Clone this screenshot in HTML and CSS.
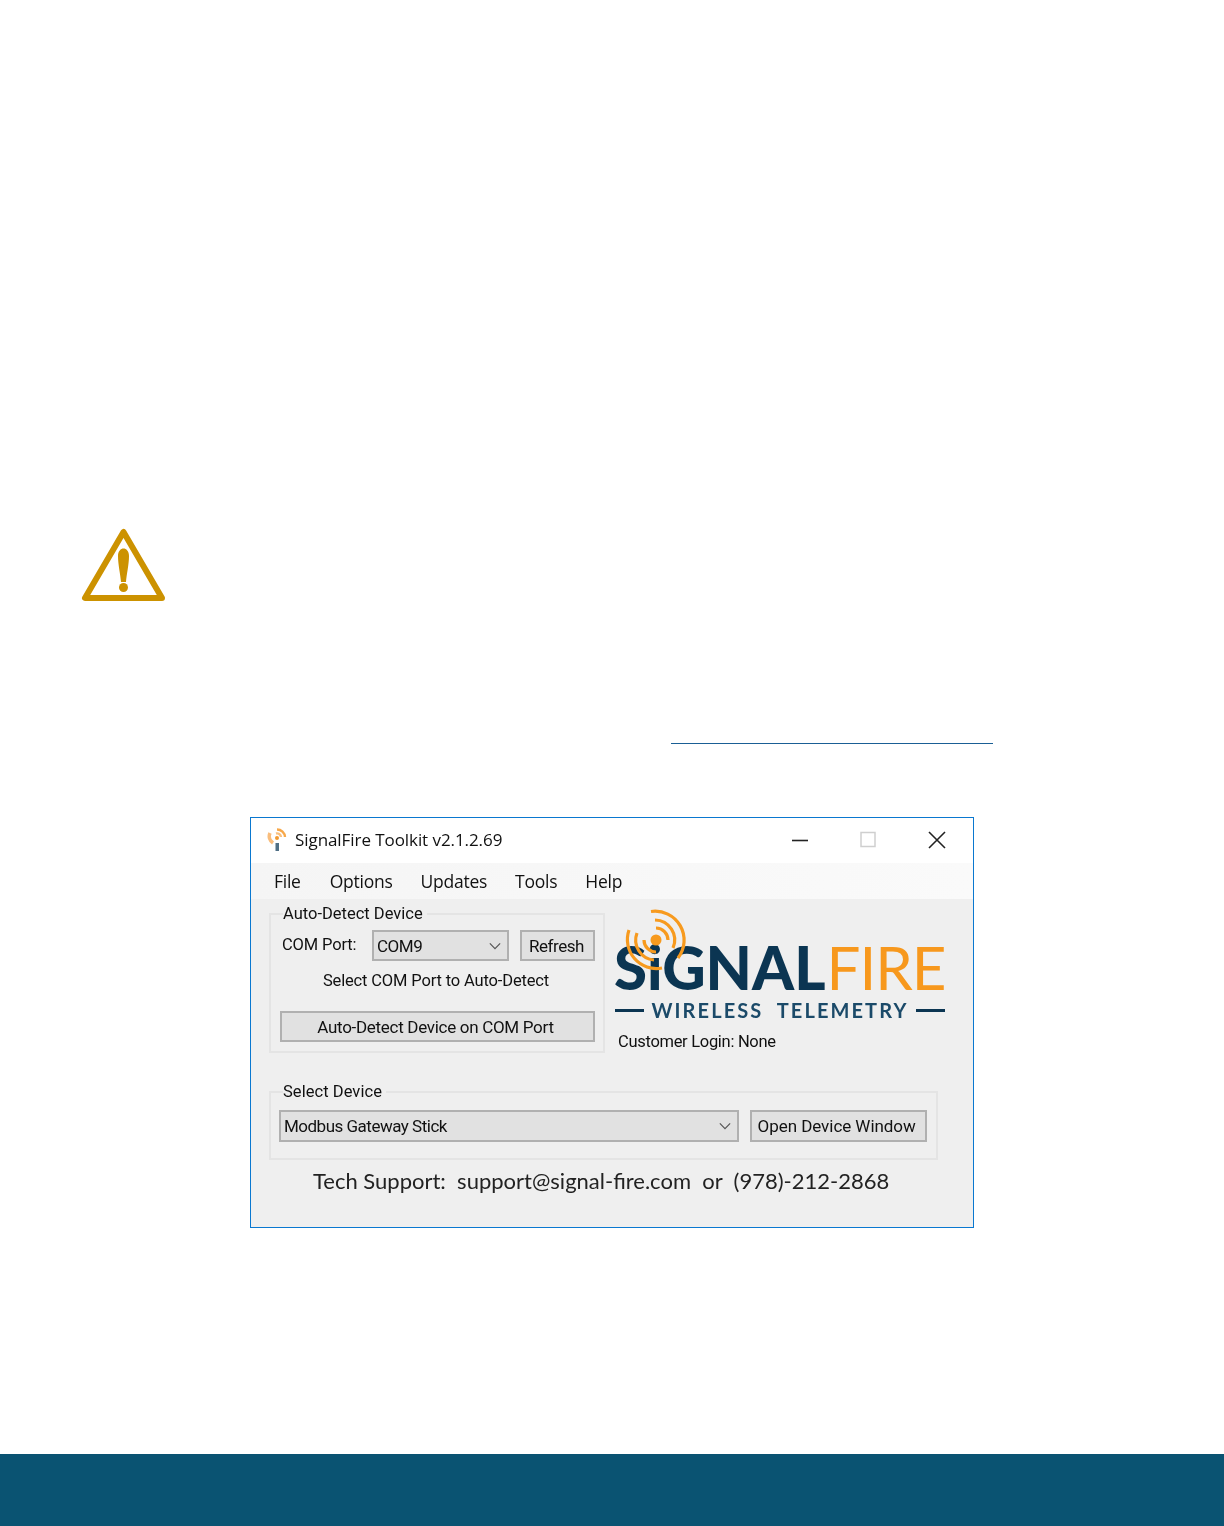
FILE: index.html
```html
<!DOCTYPE html>
<html lang="en">
<head>
<meta charset="utf-8">
<title>SignalFire Toolkit</title>
<link rel="stylesheet" href="styles.css">
</head>
<body>
<div class="page">
  <main class="content">
    <svg class="warn" width="86" height="76" viewBox="0 0 86 76" aria-hidden="true">
      <path d="M42.5 5 L4 71 H81 Z" fill="none" stroke="#cc9200" stroke-width="6" stroke-linejoin="round"/>
      <path d="M37 29 C37 19 48 19 48 29 C48 37 45.5 48 45 55 H40 C39.5 48 37 37 37 29 Z" fill="#cc9200"/>
      <circle cx="42.5" cy="60.5" r="4.5" fill="#cc9200"/>
    </svg>
    <a class="link-line" href="#" aria-hidden="true"></a>
    <section class="window">
      <header class="titlebar">
        <svg class="app-icon" width="20" height="24" viewBox="0 0 20 24" aria-hidden="true">
          <path d="M10 1.5 A8 8 0 0 1 18 9" fill="none" stroke="#f7a84a" stroke-width="2.4"/>
          <path d="M3 5 A8 8 0 0 0 6 15" fill="none" stroke="#f9bd7c" stroke-width="3.6"/>
          <path d="M9 5.5 A4 4 0 0 1 14 9" fill="none" stroke="#f9c080" stroke-width="2.4"/>
          <circle cx="10" cy="10" r="2" fill="#f39a30"/>
          <rect x="8.5" y="15" width="3.5" height="8" fill="#4f6f85"/>
        </svg>
        <span class="title">SignalFire Toolkit v2.1.2.69</span>
        <div class="controls">
          <svg width="16" height="18" viewBox="0 0 16 18" aria-hidden="true"><path d="M0 9.5 H16" stroke="#222" stroke-width="1.6"/></svg>
          <svg width="16" height="18" viewBox="0 0 16 18" aria-hidden="true"><rect x="1" y="1.5" width="14" height="14" fill="none" stroke="#cfcfcf" stroke-width="1.5"/></svg>
          <svg width="18" height="18" viewBox="0 0 18 18" aria-hidden="true"><path d="M1 1 L17 17 M17 1 L1 17" stroke="#222" stroke-width="1.6"/></svg>
        </div>
      </header>
      <nav class="menubar">
        <span>File</span><span>Options</span><span>Updates</span><span>Tools</span><span>Help</span>
      </nav>
      <div class="client">
        <div class="top-row">
          <fieldset class="group group-auto">
            <legend>Auto-Detect Device</legend>
            <div class="com-row">
              <span class="com-label">COM Port:</span>
              <div class="combo combo-com"><span>COM9</span>
                <svg width="12" height="8" viewBox="0 0 14 8" aria-hidden="true"><path d="M1 1 L7 7 L13 1" fill="none" stroke="#555" stroke-width="1.4"/></svg>
              </div>
              <button class="btn btn-refresh" type="button">Refresh</button>
            </div>
            <p class="hint">Select COM Port to Auto-Detect</p>
            <button class="btn btn-wide" type="button">Auto-Detect Device on COM Port</button>
          </fieldset>
          <div class="brand">
            <div class="logo">
              <div class="logo-name"><span class="navy">SiGNAL</span><span class="orange">FIRE</span></div>
              <svg class="rings" width="64" height="64" viewBox="0 0 64 64" aria-hidden="true">
                <g fill="none" stroke="#f79a1e" stroke-width="3.2">
                  <path d="M27 3.5 A29 29 0 0 1 54 50"/>
                  <path d="M5 22 A29 29 0 0 0 38 60"/>
                  <path d="M31 12 A20 20 0 0 1 49 40"/>
                  <path d="M13 25 A20 20 0 0 0 30 52"/>
                  <path d="M32 20 A12 12 0 0 1 44 32"/>
                  <path d="M20 32 A12 12 0 0 0 32 44"/>
                </g>
                <circle cx="32" cy="32" r="5.5" fill="#f79a1e"/>
              </svg>
              <div class="logo-tag"><i></i><span>WIRELESS&nbsp; TELEMETRY</span><i></i></div>
            </div>
            <div class="login">Customer Login: None</div>
          </div>
        </div>
        <fieldset class="group group-device">
          <legend>Select Device</legend>
          <div class="device-row">
            <div class="combo combo-device"><span>Modbus Gateway Stick</span>
              <svg width="12" height="8" viewBox="0 0 14 8" aria-hidden="true"><path d="M1 1 L7 7 L13 1" fill="none" stroke="#555" stroke-width="1.4"/></svg>
            </div>
            <button class="btn btn-open" type="button">Open Device Window</button>
          </div>
        </fieldset>
        <p class="support">Tech Support:&nbsp; support@signal-fire.com&nbsp; or&nbsp; (978)-212-2868</p>
      </div>
    </section>
  </main>
  <footer class="footer"></footer>
</div>
</body>
</html>
```

FILE: styles.css
```css
* { box-sizing: border-box; }
html, body { margin: 0; padding: 0; background: #fff; }
.page { height: 1526px; display: flex; flex-direction: column; }
.content { flex: 1; padding-top: 527px; display: flex; flex-direction: column; }
.warn { display: block; margin-left: 81px; }
.link-line { display: block; width: 322px; height: 1px; margin: 140px 0 0 671px; background: #1a5f95; }
.window {
  width: 724px; height: 411px; margin: 73px 0 0 250px;
  border: 1px solid #0a78d0; background: #efefef;
  display: flex; flex-direction: column;
  font-family: "Roboto", "Liberation Sans", sans-serif; color: #111;
  filter: blur(0.35px);
}
.titlebar { height: 45px; background: #fff; display: flex; align-items: center; padding: 0 27px 2px 16px; flex: none; }
.app-icon { flex: none; }
.title { margin-left: 8px; font-family: "Open Sans", sans-serif; font-size: 17px; letter-spacing: -0.07px; }
.controls { margin-left: auto; display: flex; align-items: center; gap: 52px; }
.menubar {
  height: 36px; flex: none; display: flex; align-items: center; gap: 28px; padding-left: 23px;
  background: linear-gradient(90deg, #f5f5f5, #fafafa);
  font-family: "Open Sans", sans-serif; font-size: 17.5px; letter-spacing: -0.25px;
}
.menubar span:first-child { margin-right: 1px; }
.client { flex: 1; padding: 6px 0 0 18px; display: flex; flex-direction: column; }
.top-row { display: flex; gap: 9px; }
.group { margin: 0; min-width: 0; border: 2px solid #e4e4e4; }
.group legend { padding: 0 4px 0 0; background: #efefef; font-size: 16.5px; line-height: 18px; letter-spacing: 0; }
.group-auto legend { margin-left: 3px; }
.group-device legend { margin-left: 4px; letter-spacing: 0.05px; }
.group-auto { width: 336px; height: 148px; padding: 7px 8px 8px 9px; }
.com-row { display: flex; align-items: center; height: 31px; }
.com-label { width: 90px; flex: none; margin-left: 2px; font-size: 16.5px; letter-spacing: -0.15px; margin-top: -2px; }
.combo, .btn { background: #e1e1e1; border: 2px solid #b0b0b0; font-family: inherit; font-size: 17px; color: inherit; }
.combo { display: flex; align-items: center; justify-content: space-between; height: 31px; padding: 0 6px 0 3px; letter-spacing: -0.45px; }
.combo-com { width: 137px; flex: none; }
.btn { height: 31px; padding: 0; }
.btn-refresh { width: 75px; flex: none; margin-left: 11px; letter-spacing: -0.45px; padding-right: 2px; }
.hint { margin: 0; padding: 8px 3px 18px 0; line-height: 24px; text-align: center; font-size: 16.5px; letter-spacing: -0.15px; }
.btn-wide { width: 315px; display: block; letter-spacing: -0.3px; padding-right: 4px; }
.brand { width: 332px; }
.logo { position: relative; height: 115px; }
.logo-name { position: absolute; left: 0; top: 32px; font-family: "Lato", sans-serif; font-size: 60px; line-height: 60px; white-space: nowrap; }
.navy { color: #0b3552; font-weight: 900; }
.orange { color: #f7981d; font-weight: 400; letter-spacing: -1px; margin-left: 1px; }
.rings { position: absolute; left: 10px; top: 3px; }
.logo-tag { position: absolute; left: 1px; right: 1px; top: 93px; display: flex; align-items: center; justify-content: space-between; font-family: "Lato", sans-serif; font-weight: 700; font-size: 20px; line-height: 24px; letter-spacing: 2.1px; color: #1b4a69; white-space: nowrap; }
.logo-tag i { width: 29px; height: 3px; background: #0b3552; flex: none; }
.login { margin: 12px 0 0 4px; font-size: 16.5px; line-height: 20px; letter-spacing: -0.3px; }
.group-device { width: 669px; height: 77px; margin-top: 30px; padding: 9px 9px 0 8px; }
.device-row { display: flex; gap: 11px; }
.combo-device { width: 461px; height: 32px; letter-spacing: -0.5px; }
.btn-open { width: 177px; height: 32px; letter-spacing: -0.05px; padding-right: 4px; }
.support { margin: 8px 0 0 44px; font-family: "Lato", sans-serif; font-size: 22px; line-height: 26px; color: #222; white-space: nowrap; }
.footer { height: 72px; flex: none; background: #0a5372; }
```
